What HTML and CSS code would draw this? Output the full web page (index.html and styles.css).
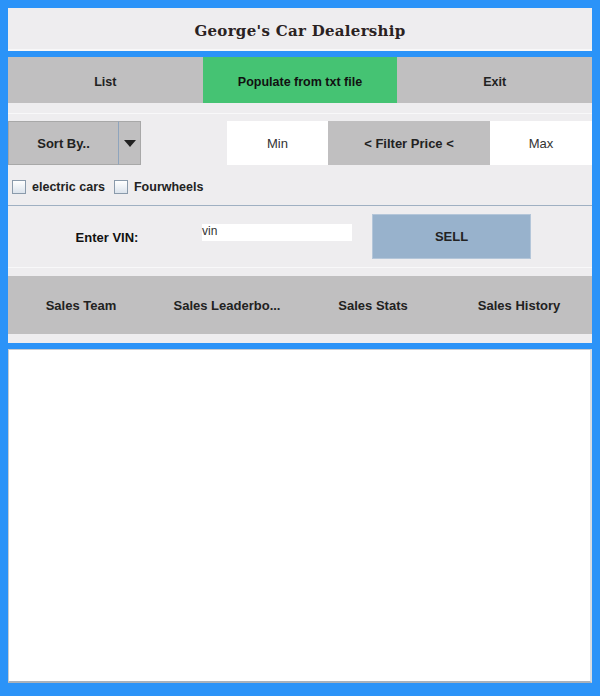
FILE: index.html
```html
<!DOCTYPE html>
<html>
<head>
<meta charset="utf-8">
<link rel="stylesheet" href="styles.css">
</head>
<body>
<div class="app">
  <div class="header">George's Car Dealership</div>
  <div class="main">
    <div class="nav">
      <div class="nav-btn">List</div>
      <div class="nav-btn green">Populate from txt file</div>
      <div class="nav-btn">Exit</div>
    </div>
    <div class="spacer"></div>
    <div class="filters">
      <div class="sort-row">
        <div class="sort">
          <div class="sort-label">Sort By..</div>
          <div class="sort-arrow"><svg width="12" height="7" viewBox="0 0 12 7"><path d="M0 0H12L6 7Z" fill="#222"/></svg></div>
        </div>
        <div class="price">
          <div class="pbox">Min</div>
          <div class="pmid">&lt; Filter Price &lt;</div>
          <div class="pbox">Max</div>
        </div>
      </div>
      <div class="checks">
        <label class="chk"><span class="box"></span>electric cars</label>
        <label class="chk"><span class="box"></span>Fourwheels</label>
      </div>
    </div>
    <div class="vin">
      <div class="vin-label">Enter VIN:</div>
      <div class="vin-field">vin</div>
      <div class="sell">SELL</div>
    </div>
    <div class="sales">
      <div class="sales-item">Sales Team</div>
      <div class="sales-item">Sales Leaderbo...</div>
      <div class="sales-item">Sales Stats</div>
      <div class="sales-item">Sales History</div>
    </div>
  </div>
  <div class="output"></div>
</div>
</body>
</html>
```

FILE: styles.css
```css
html, body {
  margin: 0;
  padding: 0;
}
body {
  background: #2b93f8;
  font-family: "Liberation Sans", Arial, sans-serif;
  color: #222;
}
.app {
  width: 600px;
  height: 696px;
  box-sizing: border-box;
  padding: 8px 8px 0 8px;
  display: flex;
  flex-direction: column;
}
.header {
  height: 43px;
  padding-top: 5px;
  background: #eeedef;
  border-bottom: 2px solid #f7f7f8;
  box-sizing: border-box;
  display: flex;
  align-items: center;
  justify-content: center;
  font-family: "DejaVu Serif", Georgia, serif;
  font-weight: bold;
  font-size: 15px;
  letter-spacing: 0.3px;
  color: #2a2222;
}
.main {
  margin-top: 6px;
  background: #eeedef;
  height: 286px;
  display: flex;
  flex-direction: column;
}
.nav {
  display: grid;
  grid-template-columns: 1fr 1fr 1fr;
  height: 46px;
}
.nav-btn {
  background: #c0bfc0;
  display: flex;
  align-items: center;
  justify-content: center;
  padding-top: 3px;
  box-sizing: border-box;
  font-size: 12.5px;
  font-weight: bold;
  color: #222;
}
.nav-btn.green {
  background: #45c373;
  color: #111;
}
.spacer {
  height: 10px;
  border-bottom: 1px solid #f8f8f9;
  flex-shrink: 0;
}
.filters {
  padding-top: 7px;
  border-bottom: 1px solid #9fb0c2;
  height: 92px;
  box-sizing: border-box;
  flex-shrink: 0;
}
.sort-row {
  display: flex;
  justify-content: space-between;
  height: 44px;
}
.sort {
  display: flex;
  height: 44px;
}
.sort-label {
  width: 111px;
  background: #c0bfc0;
  border: 1px solid #a8a8a8;
  border-right: 1px solid #8ea4bd;
  box-sizing: border-box;
  display: flex;
  align-items: center;
  justify-content: center;
  font-size: 13px;
  font-weight: bold;
  color: #222;
}
.sort-arrow {
  width: 22px;
  background: #c0bfc0;
  border: 1px solid #a8a8a8;
  border-left: none;
  box-sizing: border-box;
  display: flex;
  align-items: center;
  justify-content: center;
}
.price {
  display: flex;
  height: 44px;
}
.pbox {
  background: #fff;
  width: 101px;
  display: flex;
  align-items: center;
  justify-content: center;
  font-size: 13px;
  color: #333;
}
.price .pbox:last-child {
  width: 102px;
}
.pmid {
  background: #c0bfc0;
  width: 162px;
  display: flex;
  align-items: center;
  justify-content: center;
  font-size: 13px;
  font-weight: bold;
  color: #222;
}
.checks {
  display: flex;
  align-items: center;
  height: 40px;
  padding-top: 4px;
  box-sizing: border-box;
  padding-left: 4px;
  gap: 9px;
}
.chk {
  display: flex;
  align-items: center;
  font-size: 12.5px;
  font-weight: bold;
  color: #222;
}
.box {
  width: 12px;
  height: 12px;
  border: 1px solid #8a9aab;
  background: linear-gradient(#fff, #dbe3ec);
  margin-right: 6px;
}
.vin {
  height: 62px;
  border-bottom: 1px solid #f8f8f9;
  box-sizing: border-box;
  display: flex;
  align-items: center;
  flex-shrink: 0;
}
.vin-label {
  width: 194px;
  padding-left: 4px;
  box-sizing: border-box;
  text-align: center;
  font-size: 13px;
  font-weight: bold;
  color: #111;
  margin-top: 2px;
}
.vin-field {
  width: 150px;
  height: 17px;
  background: #fff;
  font-size: 12px;
  color: #333;
  line-height: 14px;
  margin-top: -8px;
}
.sell {
  margin-left: 20px;
  width: 159px;
  height: 45px;
  background: #98b2cc;
  border: 1px solid #b4c6d9;
  box-sizing: border-box;
  display: flex;
  align-items: center;
  justify-content: center;
  font-size: 13px;
  font-weight: bold;
  color: #222;
}
.sales {
  margin-top: 8px;
  height: 58px;
  flex-shrink: 0;
  background: #c0bfc0;
  display: grid;
  grid-template-columns: repeat(4, 1fr);
}
.sales-item {
  display: flex;
  align-items: center;
  justify-content: center;
  font-size: 13px;
  font-weight: bold;
  color: #222;
}
.output {
  margin-top: 6px;
  height: 334px;
  background: #fff;
  border: 1px solid #c8ccd2;
  border-bottom: 2px solid #a9b1bb;
  border-right: 2px solid #d9dde2;
  box-sizing: border-box;
}
```
